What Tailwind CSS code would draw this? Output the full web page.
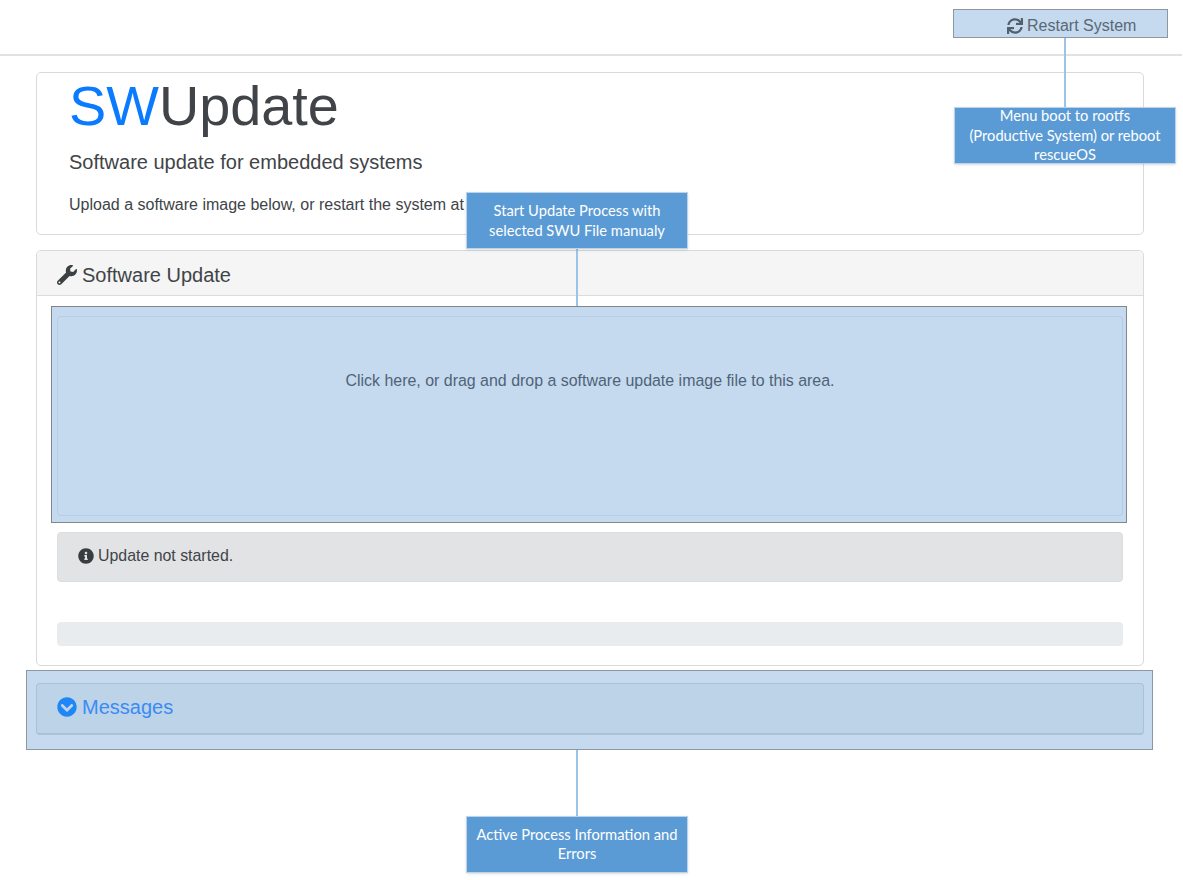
<!DOCTYPE html>
<html lang="en">
<head>
    <meta charset="UTF-8">
    <title>SWUpdate</title>
    <script src="https://cdn.jsdelivr.net/npm/@tailwindcss/browser@4"></script>
</head>
<body class="bg-white text-[#404448] font-['Liberation_Sans',Arial,sans-serif] relative h-[880px] overflow-hidden">
    <!-- top bar -->
    <nav class="h-[56px] w-[1182px] border-b-2 border-[#dfe1e2] pt-[9px] pl-[953px]">
        <div class="w-[215px] h-[29px] bg-[#c5daef] border border-[#8e979f] flex items-center text-[#5a6875] pl-[53px] pt-[4px] gap-1">
            <svg class="w-4 h-4 fill-[#52606c]" viewBox="0 0 512 512"><path d="M440.65 12.57l4 82.77A247.16 247.16 0 0 0 255.83 8C134.73 8 33.91 94.92 12.29 209.82A12 12 0 0 0 24.09 224h49.05a12 12 0 0 0 11.67-9.26 175.91 175.91 0 0 1 317-56.94l-101.46-4.86a12 12 0 0 0-12.57 12v47.41a12 12 0 0 0 12 12H500a12 12 0 0 0 12-12V12a12 12 0 0 0-12-12h-47.37a12 12 0 0 0-11.98 12.57zM255.83 432a175.61 175.61 0 0 1-146-77.8l101.8 4.87a12 12 0 0 0 12.57-12v-47.4a12 12 0 0 0-12-12H12a12 12 0 0 0-12 12V500a12 12 0 0 0 12 12h47.35a12 12 0 0 0 12-12.6l-4.15-82.57A247.17 247.17 0 0 0 255.83 504c121.11 0 221.93-86.92 243.55-201.82a12 12 0 0 0-11.8-14.18h-49.05a12 12 0 0 0-11.67 9.26A175.86 175.86 0 0 1 255.83 432z"/></svg>
            <span class="text-base">Restart System</span>
        </div>
    </nav>

    <main class="px-[36px] w-[1180px] pt-[16px]">
        <!-- intro -->
        <section class="h-[163px] border border-[#d9dadb] rounded-[5px] pl-[32px] overflow-hidden">
            <h1 class="text-[55.8px] leading-[64px] mt-[1px]"><span class="text-[#0a7bff]">SW</span>Update</h1>
            <p class="text-[20px] leading-[24px] mt-[12px]">Software update for embedded systems</p>
            <p class="text-base leading-[24px] mt-[19px]">Upload a software image below, or restart the system at any time.</p>
        </section>

        <!-- update card -->
        <section class="mt-[15px] h-[416px] border border-[#d9dadb] rounded-[5px]">
            <header class="h-[45px] bg-[#f5f5f5] border-b border-[#dcdcdc] rounded-t-[5px] flex items-center pl-[20px] pt-[3px] gap-[5px] text-[20px]">
                <svg class="w-5 h-5 fill-[#3c4043]" viewBox="0 0 512 512"><path d="M507.73 109.1c-2.24-9.03-13.54-12.09-20.12-5.51l-74.36 74.36-67.88-11.31-11.31-67.88 74.36-74.36c6.62-6.62 3.43-17.9-5.66-20.16-47.38-11.74-99.55.91-136.58 37.93-39.64 39.64-50.55 97.1-34.05 147.2L18.74 402.76c-24.99 24.99-24.99 65.51 0 90.5 24.99 24.99 65.51 24.99 90.5 0l213.21-213.21c50.12 16.71 107.47 5.68 147.37-34.22 37.07-37.07 49.7-89.32 37.91-136.73zM64 472c-13.25 0-24-10.75-24-24 0-13.26 10.75-24 24-24s24 10.74 24 24c0 13.25-10.75 24-24 24z"/></svg>
                <span>Software Update</span>
            </header>
            <div class="ml-[14px] mt-[10px] w-[1076px] h-[217px] bg-[#c5daef] border border-[#80888f] pt-[9px] pl-[5px]">
                <div class="w-[1066px] h-[200px] border border-[#b5cee6] rounded-[4px] text-center text-[#4f6377] text-[15.95px] pt-[52px]">Click here, or drag and drop a software update image file to this area.</div>
            </div>
            <div class="ml-[20px] mt-[9px] w-[1066px] h-[50px] bg-[#e2e3e5] border border-[#dcdddf] rounded-[4px] flex items-center pl-[20px] pb-[3px] gap-[4px] text-[15.9px]">
                <svg class="w-4 h-4 fill-[#383d41]" viewBox="0 0 512 512"><path d="M256 8C119.043 8 8 119.083 8 256c0 136.997 111.043 248 248 248s248-111.003 248-248C504 119.083 392.957 8 256 8zm0 110c23.196 0 42 18.804 42 42s-18.804 42-42 42-42-18.804-42-42 18.804-42 42-42zm56 254c0 6.627-5.373 12-12 12h-88c-6.627 0-12-5.373-12-12v-24c0-6.627 5.373-12 12-12h12v-64h-12c-6.627 0-12-5.373-12-12v-24c0-6.627 5.373-12 12-12h64c6.627 0 12 5.373 12 12v100h12c6.627 0 12 5.373 12 12v24z"/></svg>
                <span>Update not started.</span>
            </div>
            <div class="ml-[20px] mt-[40px] w-[1066px] h-[24px] bg-[#e9ecef] rounded-[4px]"></div>
        </section>

        <!-- messages -->
        <div class="-ml-[10px] mt-[4px] w-[1127px] h-[80px] bg-[#c5daef] border border-[#8e979f] pt-[12px] pl-[9px]">
            <section class="w-[1108px] h-[52px] bg-[#bdd3e8] border border-[#abc1d6] border-b-2 rounded-[4px] flex items-center pl-[20px] pb-[4px] gap-[5px] text-[20px] text-[#3a8bf3]">
                <svg class="w-5 h-5 fill-[#1f86f5]" viewBox="0 0 512 512"><path d="M504 256c0 137-111 248-248 248S8 393 8 256 119 8 256 8s248 111 248 248zM273 369.9l135.5-135.5c9.4-9.4 9.4-24.6 0-33.9l-17-17c-9.4-9.4-24.6-9.4-33.9 0L256 285.1 154.4 183.5c-9.4-9.4-24.6-9.4-33.9 0l-17 17c-9.4 9.4-9.4 24.6 0 33.9L239 369.9c9.4 9.4 24.6 9.4 34 0z"/></svg>
                <span>Messages</span>
            </section>
        </div>
    </main>

    <!-- annotations -->
    <div class="absolute left-[1064px] top-[38px] w-[2px] h-[69px] bg-[#9dc3e6]"></div>
    <div class="absolute left-[954px] top-[107px] w-[222px] h-[57px] bg-[#5b9bd5] border border-[#bcd3ea] shadow-sm text-white text-center font-['Lato',sans-serif] text-[14.7px] leading-[19.5px] flex items-center justify-center">Menu boot to rootfs<br>(Productive System) or reboot<br>rescueOS</div>

    <div class="absolute left-[576px] top-[249px] w-[2px] h-[57px] bg-[#9dc3e6]"></div>
    <div class="absolute left-[466px] top-[192px] w-[222px] h-[57px] bg-[#5b9bd5] border border-[#bcd3ea] shadow-sm text-white text-center font-['Lato',sans-serif] text-[14.7px] leading-[19.5px] flex items-center justify-center">Start Update Process with<br>selected SWU File manualy</div>

    <div class="absolute left-[576px] top-[750px] w-[2px] h-[66px] bg-[#9dc3e6]"></div>
    <div class="absolute left-[466px] top-[816px] w-[222px] h-[57px] bg-[#5b9bd5] border border-[#bcd3ea] shadow-sm text-white text-center font-['Lato',sans-serif] text-[14.7px] leading-[19px] pb-[2px] flex items-center justify-center">Active Process Information and<br>Errors</div>
</body>
</html>
